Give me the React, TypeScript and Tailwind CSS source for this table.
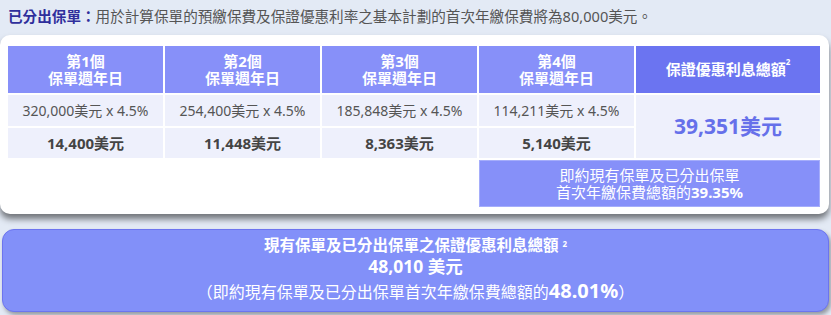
import React from "react"

const font = { fontFamily: '"Noto Sans", "Noto Sans CJK TC", sans-serif' }

const years = [
    { n: 1, calc: "320,000美元 x 4.5%", amt: "14,400美元" },
    { n: 2, calc: "254,400美元 x 4.5%", amt: "11,448美元" },
    { n: 3, calc: "185,848美元 x 4.5%", amt: "8,363美元" },
    { n: 4, calc: "114,211美元 x 4.5%", amt: "5,140美元" },
]

const App = () => {
    return (
        <div className="w-[831px] h-[315px] bg-[#e3eaf5] overflow-hidden" style={font}>
            <div className="h-[35px] pl-[8px] pt-[4px] text-[14.6px] leading-[24px] text-[#555]">
                <span className="font-bold text-[#2f2f9c]">已分出保單：</span>
                用於計算保單的預繳保費及保證優惠利率之基本計劃的首次年繳保費將為80,000美元。
            </div>

            <div className="mr-[2px] h-[179px] rounded-[10px] bg-white pl-[8px] pr-[9px] pt-[11px] shadow-[0_5px_6px_rgba(0,0,0,0.5)]">
                <div className="grid grid-cols-[155px_155px_155px_155px_1fr] grid-rows-[47px_31px_30px_47px] gap-[2px]">
                    {years.map((y) => (
                        <div
                            key={`h${y.n}`}
                            className="flex flex-col items-center justify-center bg-[#8790f9] text-[15px] leading-[17px] font-bold text-white"
                        >
                            <span>第{y.n}個</span>
                            <span>保單週年日</span>
                        </div>
                    ))}
                    <div className="flex items-center justify-center bg-[#6b74f1] text-[15px] font-bold text-white">
                        保證優惠利息總額<sup className="text-[8px] -mt-2">2</sup>
                    </div>

                    {years.map((y) => (
                        <div key={`c${y.n}`} className="flex items-center justify-center bg-[#eef0fc] text-[14px] text-[#555]">
                            {y.calc}
                        </div>
                    ))}
                    <div className="row-span-2 flex items-center justify-center bg-[#eef0fc] text-[21px] font-bold text-[#6670ea]">
                        39,351美元
                    </div>

                    {years.map((y) => (
                        <div key={`a${y.n}`} className="flex items-center justify-center bg-[#eef0fc] text-[15px] font-bold text-[#444]">
                            {y.amt}
                        </div>
                    ))}

                    <div className="col-span-3" />
                    <div className="col-span-2 flex flex-col items-center justify-center border border-[#a5adfb] bg-[#8690f9] text-[15px] leading-[17px] text-white">
                        <span>即約現有保單及已分出保單</span>
                        <span>
                            首次年繳保費總額的<b>39.35%</b>
                        </span>
                    </div>
                </div>
            </div>

            <div className="mt-[15px] mx-[2px] h-[83px] rounded-[12px] border border-[#6c74ef] bg-[#8290f9] flex flex-col items-center justify-center text-white shadow-[2px_3px_4px_rgba(0,0,0,0.35)]">
                <div className="text-[15.5px] leading-[20px] font-bold">
                    現有保單及已分出保單之保證優惠利息總額 <sup className="text-[8px]">2</sup>
                </div>
                <div className="text-[17.5px] leading-[22px] font-bold">48,010 美元</div>
                <div className="text-[16px] leading-[28px]">
                    （即約現有保單及已分出保單首次年繳保費總額的<b className="text-[20px]">48.01%</b>）
                </div>
            </div>
        </div>
    )
}

export default App
